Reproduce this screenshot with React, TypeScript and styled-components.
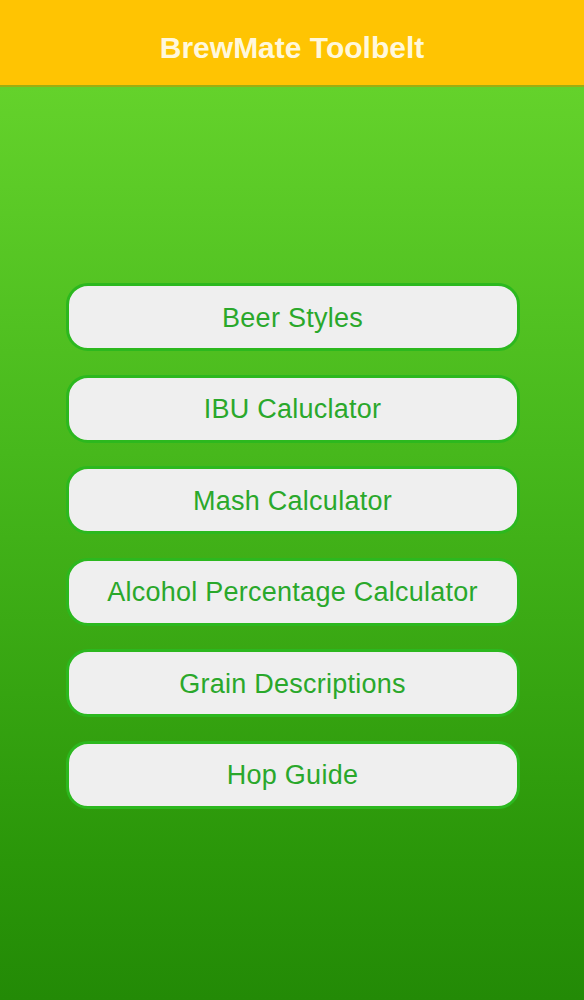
import styled, { createGlobalStyle } from 'styled-components';

const GlobalStyle = createGlobalStyle`
	html, body {
		margin: 0;
		padding: 0;
	}
	body {
		font-family: 'Liberation Sans', Arial, sans-serif;
	}
`;

const Screen = styled.div`
	width: 584px;
	height: 1000px;
	display: flex;
	flex-direction: column;
	overflow: hidden;
`;

const Header = styled.header`
	height: 87px;
	flex-shrink: 0;
	background: #ffc402;
	border-bottom: 2px solid #9dae12;
	display: flex;
	align-items: center;
	justify-content: center;
	box-sizing: border-box;
	padding-top: 10px;
`;

const Title = styled.h1`
	margin: 0;
	font-family: 'Liberation Sans', Arial, sans-serif;
	font-size: 30px;
	font-weight: 700;
	color: #fff8dc;
`;

const Body = styled.main`
	flex: 1;
	background: linear-gradient(180deg, #64d22b 0%, #47b81c 40%, #2a9609 85%, #238a06 100%);
	display: flex;
	flex-direction: column;
	align-items: center;
	padding-top: 196px;
	gap: 23.5px;
`;

const MenuButton = styled.button`
	width: 454px;
	height: 68px;
	box-sizing: border-box;
	margin-left: 1px;
	border: 3px solid #2cb81e;
	border-radius: 22px;
	background: #efefef;
	color: #2aa82b;
	font-family: 'Liberation Sans', Arial, sans-serif;
	font-size: 27px;
	letter-spacing: 0.25px;
	cursor: pointer;
	padding: 2px 0 0;
`;

const items = [
	'Beer Styles',
	'IBU Caluclator',
	'Mash Calculator',
	'Alcohol Percentage Calculator',
	'Grain Descriptions',
	'Hop Guide',
];

const App = () => {
	return (
		<>
			<GlobalStyle />
			<Screen>
				<Header>
					<Title>BrewMate Toolbelt</Title>
				</Header>
				<Body>
					{items.map((label) => (
						<MenuButton key={label}>{label}</MenuButton>
					))}
				</Body>
			</Screen>
		</>
	);
};

export default App;
